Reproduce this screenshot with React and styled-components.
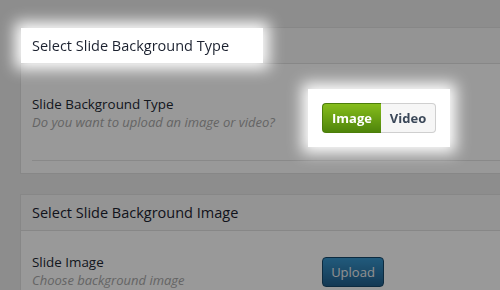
import React from 'react'
import styled, { createGlobalStyle, css } from 'styled-components'

const GlobalStyle = createGlobalStyle`
  html, body {
    margin: 0;
    padding: 0;
    background: #ececec;
    font-family: "Open Sans", "Liberation Sans", sans-serif;
    overflow: hidden;
  }
`

const spotlight = css`
  position: relative;
  z-index: 11;
  background: #fff;
`

const App = () => (
  <Page>
    <GlobalStyle />
    <Panel>
      <PanelHeader>
        <PanelTitle highlight>Select Slide Background Type</PanelTitle>
      </PanelHeader>
      <PanelBody pad={31}>
        <Row>
          <Label>
            <LabelTitle>Slide Background Type</LabelTitle>
            <LabelHint>Do you want to upload an image or video?</LabelHint>
          </Label>
          <Control highlight offset={8}>
            <Toggle>
              <ToggleButton active width={59}>Image</ToggleButton>
              <ToggleButton width={55}>Video</ToggleButton>
            </Toggle>
          </Control>
        </Row>
      </PanelBody>
    </Panel>

    <Panel>
      <PanelHeader>
        <PanelTitle>Select Slide Background Image</PanelTitle>
      </PanelHeader>
      <PanelBody pad={22}>
        <Row>
          <Label>
            <LabelTitle>Slide Image</LabelTitle>
            <LabelHint>Choose background image</LabelHint>
          </Label>
          <Control offset={4}>
            <UploadButton>Upload</UploadButton>
          </Control>
        </Row>
      </PanelBody>
    </Panel>
    <Overlay />
  </Page>
)

const Page = styled.div`
  padding: 27px 0 0 20px;
  height: 290px;
  box-sizing: border-box;
  overflow: hidden;
`

const Panel = styled.section`
  background: #fff;
  border: 1px solid #e2e2e2;
  border-right: 0;
  margin-bottom: 20px;
  padding-bottom: 12px;
`

const PanelHeader = styled.div`
  height: 35px;
  background: #f7f7f7;
  border-bottom: 1px solid #e2e2e2;
`

const PanelTitle = styled.h3`
  margin: 0;
  display: inline-block;
  height: 35px;
  line-height: 35px;
  padding: 0 34px 0 11px;
  font-size: 14.5px;
  font-weight: 500;
  color: #1c2230;
  ${(p) =>
    p.highlight &&
    css`
      ${spotlight}
      box-shadow: 0 0 14px 6px #fff;
    `}
`

const PanelBody = styled.div`
  padding: ${(p) => p.pad}px 0 0 11px;
`

const Row = styled.div`
  display: flex;
  align-items: flex-start;
  border-bottom: 1px solid #e4e4e4;
  padding-bottom: 27px;
`

const Label = styled.div`
  width: 290px;
  flex-shrink: 0;
  display: flex;
  flex-direction: column;
`

const LabelTitle = styled.span`
  font-size: 13.4px;
  line-height: 18px;
  font-weight: 500;
  color: #222833;
`

const LabelHint = styled.span`
  font-size: 13px;
  line-height: 18px;
  font-style: italic;
  color: #a8a8a8;
`

const Control = styled.div`
  margin-top: ${(p) => p.offset}px;
  ${(p) =>
    p.highlight &&
    css`
      ${spotlight}
      box-shadow: 0 0 0 14px #fff, 0 0 14px 20px #fff;
    `}
`

const Toggle = styled.div`
  display: flex;
`

const ToggleButton = styled.button`
  width: ${(p) => p.width}px;
  height: 30px;
  padding: 0;
  font-family: inherit;
  font-size: 13px;
  font-weight: 700;
  cursor: pointer;
  border: 1px solid #cfcfcf;
  color: #3b4859;
  background: #f6f6f6;

  &:first-child {
    border-radius: 4px 0 0 4px;
    border-right: 0;
  }

  &:last-child {
    border-radius: 0 4px 4px 0;
    border-left: 0;
  }

  ${(p) =>
    p.active &&
    css`
      color: #fff;
      border-color: #4c7e0a;
      background: linear-gradient(#86bd1c, #4f850b);
    `}
`

const UploadButton = styled.button`
  width: 62px;
  height: 30px;
  padding: 0;
  font-family: inherit;
  font-size: 13px;
  color: #f0f0f0;
  border: 1px solid #17496b;
  border-radius: 4px;
  background: linear-gradient(#3897cf, #215f8c);
`

const Overlay = styled.div`
  position: fixed;
  inset: 0;
  z-index: 10;
  background: rgba(0, 0, 0, 0.4);
`

export default App
